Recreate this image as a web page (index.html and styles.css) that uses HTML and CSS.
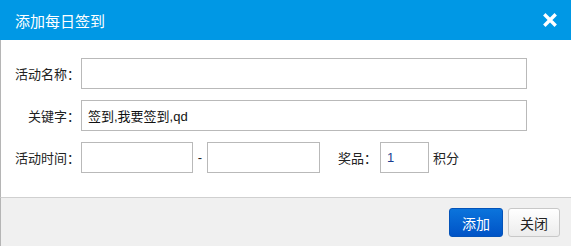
FILE: index.html
```html
<!DOCTYPE html>
<html lang="zh-CN">
<head>
  <meta charset="UTF-8">
  <title>添加每日签到</title>
  <link rel="stylesheet" href="styles.css">
</head>
<body>
  <div class="dialog">
    <div class="dialog-head">
      <span class="dialog-title">添加每日签到</span>
      <span class="dialog-close">
        <svg width="14" height="14" viewBox="0 0 14 14"><path d="M2.5 2.5 L11.5 11.5 M11.5 2.5 L2.5 11.5" stroke="#fff" stroke-width="3.4" stroke-linecap="square"/></svg>
      </span>
    </div>

    <div class="dialog-body">
      <div class="row">
        <label class="label">活动名称：</label>
        <input type="text" class="field field-wide">
      </div>
      <div class="row">
        <label class="label">关键字：</label>
        <input type="text" class="field field-wide" value="签到,我要签到,qd">
      </div>
      <div class="row">
        <label class="label">活动时间：</label>
        <input type="text" class="field field-date">
        <span class="dash">-</span>
        <input type="text" class="field field-date2">
        <span class="prize-label">奖品：</span>
        <input type="text" class="field field-prize" value="1">
        <span class="unit">积分</span>
      </div>
    </div>

    <div class="dialog-foot">
      <button class="btn btn-primary">添加</button>
      <button class="btn btn-default">关闭</button>
    </div>
  </div>
</body>
</html>
```

FILE: styles.css
```css
* {
  box-sizing: border-box;
}
body {
  margin: 0;
  font-family: "Liberation Sans", "Noto Sans CJK SC", sans-serif;
  font-size: 13px;
  color: #222;
  background: #fff;
}
.dialog {
  width: 571px;
  height: 246px;
  display: flex;
  flex-direction: column;
}
.dialog-head {
  height: 40px;
  background: #0098e5;
  color: #fff;
  display: flex;
  align-items: center;
  justify-content: space-between;
  padding: 0 15px 0 15px;
}
.dialog-title {
  font-size: 15px;
}
.dialog-close {
  display: flex;
  margin-right: -1px;
}
.dialog-body {
  flex: 1;
  border-left: 1px solid #b5b5b5;
  padding-top: 18px;
  display: flex;
  flex-direction: column;
  gap: 11px;
}
.row {
  display: flex;
  align-items: center;
  height: 31px;
}
.label {
  width: 80px;
  text-align: right;
  padding-right: 1px;
}
.field {
  height: 31px;
  border: 1px solid #b9b9b9;
  padding: 0 6px;
  font-family: inherit;
  font-size: 13px;
  color: #111;
  outline: none;
  margin: 0;
}
.field-wide {
  width: 446px;
}
.field-date {
  width: 112px;
}
.field-date2 {
  width: 113px;
}
.dash {
  width: 14px;
  text-align: center;
}
.prize-label {
  margin-left: 18px;
  margin-right: 3px;
}
.field-prize {
  width: 49px;
  color: #1a3d8f;
}
.unit {
  margin-left: 4px;
}
.dialog-foot {
  height: 49px;
  border-left: 1px solid #b5b5b5;
  border-top: 1px solid #d0d0d0;
  background: #f0f0f0;
  display: flex;
  justify-content: flex-end;
  align-items: flex-start;
  gap: 5px;
  padding: 10px 11px 0 0;
}
.btn {
  height: 29px;
  font-family: inherit;
  font-size: 14px;
  border-radius: 3px;
  padding: 0;
  cursor: pointer;
}
.btn-primary {
  width: 54px;
  color: #fff;
  border: 1px solid #0453b8;
  background: linear-gradient(#0b74dc, #0053c6);
}
.btn-default {
  width: 52px;
  color: #222;
  border: 1px solid #c8c8c8;
  background: linear-gradient(#ffffff, #ececec);
}
```
